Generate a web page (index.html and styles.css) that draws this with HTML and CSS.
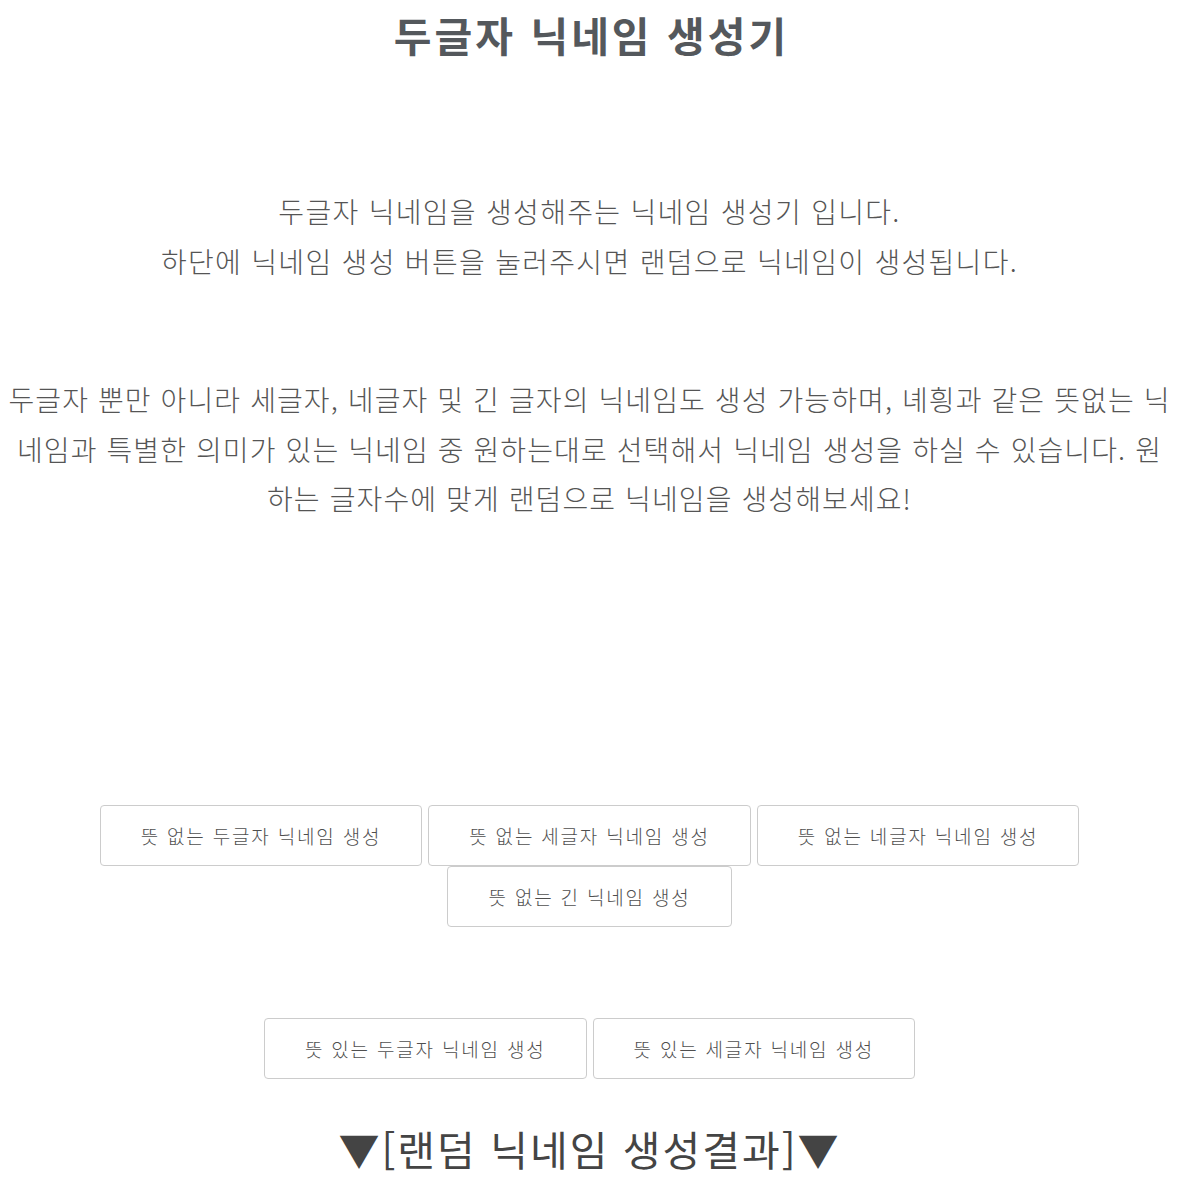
FILE: index.html
```html
<!DOCTYPE html>
<html lang="ko">
<head>
<meta charset="utf-8">
<title>두글자 닉네임 생성기</title>
<link rel="stylesheet" href="styles.css">
</head>
<body>
<div class="page">
  <h1 class="title">두글자 닉네임 생성기</h1>
  <p class="intro">두글자 닉네임을 생성해주는 닉네임 생성기 입니다.<br>하단에 닉네임 생성 버튼을 눌러주시면 랜덤으로 닉네임이 생성됩니다.</p>
  <p class="desc">두글자 뿐만 아니라 세글자, 네글자 및 긴 글자의 닉네임도 생성 가능하며, 녜힁과 같은 뜻없는 닉네임과 특별한 의미가 있는 닉네임 중 원하는대로 선택해서 닉네임 생성을 하실 수 있습니다. 원하는 글자수에 맞게 랜덤으로 닉네임을 생성해보세요!</p>
  <div class="btn-group group-a">
    <button class="btn">뜻 없는 두글자 닉네임 생성</button>
    <button class="btn">뜻 없는 세글자 닉네임 생성</button>
    <button class="btn">뜻 없는 네글자 닉네임 생성</button>
    <button class="btn">뜻 없는 긴 닉네임 생성</button>
  </div>
  <div class="btn-group group-b">
    <button class="btn">뜻 있는 두글자 닉네임 생성</button>
    <button class="btn">뜻 있는 세글자 닉네임 생성</button>
  </div>
  <h2 class="result">▼[랜덤 닉네임 생성결과]▼</h2>
</div>
</body>
</html>
```
FILE: styles.css
```css
html, body {
  margin: 0;
  padding: 0;
  background: #ffffff;
}
body {
  font-family: "Noto Sans CJK KR", "Noto Sans", sans-serif;
  color: #555555;
}
.page {
  padding: 0 8px;
  text-align: center;
}
.title {
  margin: 0;
  padding: 7px 0 0 4px;
  font-size: 41px;
  line-height: 54px;
  font-weight: 700;
  letter-spacing: 3px;
  color: #54585c;
}
.intro {
  margin: 125px 0 0;
  font-size: 28px;
  line-height: 50px;
  font-weight: 300;
  letter-spacing: 1.3px;
}
.desc {
  margin: 89px 0 0;
  font-size: 28px;
  line-height: 49.5px;
  font-weight: 300;
  letter-spacing: 1.1px;
  word-break: break-all;
}
.btn-group {
  display: flex;
  flex-wrap: wrap;
  justify-content: center;
  column-gap: 6px;
  row-gap: 0;
}
.group-a {
  width: 996px;
  margin: 0 auto;
  padding-top: 281px;
}
.group-b {
  margin-top: 91px;
}
.btn {
  font-family: inherit;
  height: 61px;
  padding: 0 40px;
  background: #ffffff;
  border: 1px solid #cccccc;
  border-radius: 4px;
  color: #4f4f4f;
  font-size: 19px;
  font-weight: 300;
  letter-spacing: 1.8px;
}
.result {
  margin: 41px 0 0;
  font-size: 41px;
  line-height: 56px;
  font-weight: 400;
  letter-spacing: 2px;
  color: #444444;
}
```
